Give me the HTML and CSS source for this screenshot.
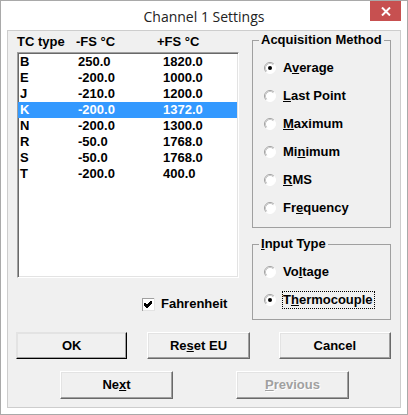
FILE: index.html
```html
<!DOCTYPE html>
<html>
<head>
<meta charset="utf-8">
<link rel="stylesheet" href="styles.css">
</head>
<body>
<div class="window">
  <div class="titlebar">
    <span></span>
    <span class="title">Channel 1 Settings</span>
    <span class="close"><svg width="10" height="9" viewBox="0 0 10 9"><path d="M1 0.5 L9 8.5 M9 0.5 L1 8.5" stroke="#fff" stroke-width="2"/></svg></span>
  </div>
  <div class="content">
    <div class="top">
      <div class="left">
        <div class="thead"><span>TC type</span><span>-FS °C</span><span>+FS °C</span></div>
        <div class="list">
          <div class="row"><span>B</span><span>250.0</span><span>1820.0</span></div>
          <div class="row"><span>E</span><span>-200.0</span><span>1000.0</span></div>
          <div class="row"><span>J</span><span>-210.0</span><span>1200.0</span></div>
          <div class="row sel"><span>K</span><span>-200.0</span><span>1372.0</span></div>
          <div class="row"><span>N</span><span>-200.0</span><span>1300.0</span></div>
          <div class="row"><span>R</span><span>-50.0</span><span>1768.0</span></div>
          <div class="row"><span>S</span><span>-50.0</span><span>1768.0</span></div>
          <div class="row"><span>T</span><span>-200.0</span><span>400.0</span></div>
        </div>
        <div class="check">
          <svg width="13" height="13" viewBox="0 0 13 13" shape-rendering="crispEdges">
            <rect x="0" y="0" width="13" height="13" fill="#fff"/>
            <path d="M0 0.5 H12.5 M0.5 0 V13" stroke="#a0a0a0"/>
            <path d="M0.5 12.5 H13 M12.5 0 V13" stroke="#e3e3e3"/>
            <path d="M3 5 V8 M4 6 V9 M5 7 V10 M6 6 V9 M7 5 V8 M8 4 V7 M9 3 V6" stroke="#000" stroke-width="1.1"/>
          </svg>
          <span>Fahrenheit</span>
        </div>
      </div>
      <div class="right">
        <fieldset class="group acq">
          <legend>Acquisition Method</legend>
          <div class="opt"><svg class="radio" width="12" height="12" viewBox="0 0 12 12"><circle cx="6" cy="6" r="5.5" fill="#fff"/><path d="M2.11 9.89 A5.5 5.5 0 0 1 9.89 2.11" fill="none" stroke="#a0a0a0"/><path d="M9.89 2.11 A5.5 5.5 0 0 1 2.11 9.89" fill="none" stroke="#fff"/><path d="M2.82 9.18 A4.5 4.5 0 0 1 9.18 2.82" fill="none" stroke="#c8c8c8"/><circle cx="6" cy="6" r="2" fill="#000"/></svg><span class="lbl">A<u>v</u>erage</span></div>
          <div class="opt"><svg class="radio" width="12" height="12" viewBox="0 0 12 12"><circle cx="6" cy="6" r="5.5" fill="#fff"/><path d="M2.11 9.89 A5.5 5.5 0 0 1 9.89 2.11" fill="none" stroke="#a0a0a0"/><path d="M9.89 2.11 A5.5 5.5 0 0 1 2.11 9.89" fill="none" stroke="#fff"/><path d="M2.82 9.18 A4.5 4.5 0 0 1 9.18 2.82" fill="none" stroke="#c8c8c8"/></svg><span class="lbl"><u>L</u>ast Point</span></div>
          <div class="opt"><svg class="radio" width="12" height="12" viewBox="0 0 12 12"><circle cx="6" cy="6" r="5.5" fill="#fff"/><path d="M2.11 9.89 A5.5 5.5 0 0 1 9.89 2.11" fill="none" stroke="#a0a0a0"/><path d="M9.89 2.11 A5.5 5.5 0 0 1 2.11 9.89" fill="none" stroke="#fff"/><path d="M2.82 9.18 A4.5 4.5 0 0 1 9.18 2.82" fill="none" stroke="#c8c8c8"/></svg><span class="lbl"><u>M</u>aximum</span></div>
          <div class="opt"><svg class="radio" width="12" height="12" viewBox="0 0 12 12"><circle cx="6" cy="6" r="5.5" fill="#fff"/><path d="M2.11 9.89 A5.5 5.5 0 0 1 9.89 2.11" fill="none" stroke="#a0a0a0"/><path d="M9.89 2.11 A5.5 5.5 0 0 1 2.11 9.89" fill="none" stroke="#fff"/><path d="M2.82 9.18 A4.5 4.5 0 0 1 9.18 2.82" fill="none" stroke="#c8c8c8"/></svg><span class="lbl">Mi<u>n</u>imum</span></div>
          <div class="opt"><svg class="radio" width="12" height="12" viewBox="0 0 12 12"><circle cx="6" cy="6" r="5.5" fill="#fff"/><path d="M2.11 9.89 A5.5 5.5 0 0 1 9.89 2.11" fill="none" stroke="#a0a0a0"/><path d="M9.89 2.11 A5.5 5.5 0 0 1 2.11 9.89" fill="none" stroke="#fff"/><path d="M2.82 9.18 A4.5 4.5 0 0 1 9.18 2.82" fill="none" stroke="#c8c8c8"/></svg><span class="lbl"><u>R</u>MS</span></div>
          <div class="opt"><svg class="radio" width="12" height="12" viewBox="0 0 12 12"><circle cx="6" cy="6" r="5.5" fill="#fff"/><path d="M2.11 9.89 A5.5 5.5 0 0 1 9.89 2.11" fill="none" stroke="#a0a0a0"/><path d="M9.89 2.11 A5.5 5.5 0 0 1 2.11 9.89" fill="none" stroke="#fff"/><path d="M2.82 9.18 A4.5 4.5 0 0 1 9.18 2.82" fill="none" stroke="#c8c8c8"/></svg><span class="lbl">Fr<u>e</u>quency</span></div>
        </fieldset>
        <fieldset class="group input">
          <legend><u>I</u>nput Type</legend>
          <div class="opt"><svg class="radio" width="12" height="12" viewBox="0 0 12 12"><circle cx="6" cy="6" r="5.5" fill="#fff"/><path d="M2.11 9.89 A5.5 5.5 0 0 1 9.89 2.11" fill="none" stroke="#a0a0a0"/><path d="M9.89 2.11 A5.5 5.5 0 0 1 2.11 9.89" fill="none" stroke="#fff"/><path d="M2.82 9.18 A4.5 4.5 0 0 1 9.18 2.82" fill="none" stroke="#c8c8c8"/></svg><span class="lbl">Vo<u>l</u>tage</span></div>
          <div class="opt"><svg class="radio" width="12" height="12" viewBox="0 0 12 12"><circle cx="6" cy="6" r="5.5" fill="#fff"/><path d="M2.11 9.89 A5.5 5.5 0 0 1 9.89 2.11" fill="none" stroke="#a0a0a0"/><path d="M9.89 2.11 A5.5 5.5 0 0 1 2.11 9.89" fill="none" stroke="#fff"/><path d="M2.82 9.18 A4.5 4.5 0 0 1 9.18 2.82" fill="none" stroke="#c8c8c8"/><circle cx="6" cy="6" r="2" fill="#000"/></svg><span class="lbl focus">T<u>h</u>ermocouple</span></div>
        </fieldset>
      </div>
    </div>
    <div class="btnrow one">
      <button class="btn ok">OK</button>
      <button class="btn reset">Re<u>s</u>et EU</button>
      <button class="btn cancel">Cancel</button>
    </div>
    <div class="btnrow two">
      <button class="btn next">Ne<u>x</u>t</button>
      <button class="btn prev" disabled><u>P</u>revious</button>
    </div>
  </div>
</div>
</body>
</html>
```

FILE: styles.css
```css
* { box-sizing: border-box; }

body {
  margin: 0;
  background: #fff;
}

.window {
  width: 408px;
  height: 415px;
  border: 1px solid #a9a9a9;
  background: #fff;
  padding: 0 6px 6px;
  display: flex;
  flex-direction: column;
}

.titlebar {
  height: 29px;
  display: grid;
  grid-template-columns: 1fr auto 1fr;
  font-family: "Open Sans", "Noto Sans", sans-serif;
  font-size: 14px;
  color: #222;
}

.title {
  align-self: center;
  padding-top: 2px;
}

.close {
  justify-self: end;
  width: 31px;
  height: 20px;
  background: #c75050;
  display: flex;
  align-items: center;
  justify-content: center;
}

.content {
  flex: 1;
  border: 1px solid #cdcdcd;
  background: #f0f0f0;
  padding: 1px 9px 0 8px;
  font: bold 13px/16px "Liberation Sans", Arial, sans-serif;
  color: #000;
}

.top {
  display: flex;
  gap: 13px;
  margin-left: 1px;
}

.left {
  width: 222px;
  padding-top: 2px;
}

.thead {
  display: grid;
  grid-template-columns: 59px 81px 1fr;
  height: 16px;
  margin-bottom: 2px;
}

.list {
  height: 226px;
  background: #fff;
  border: 1px solid;
  border-color: #a0a0a0 #fff #fff #a0a0a0;
  box-shadow: inset 1px 1px 0 #696969, inset -1px -1px 0 #e3e3e3;
  padding: 1px 1px 1px 0;
}

.row {
  display: grid;
  grid-template-columns: 58px 85px 1fr;
  height: 16px;
  padding-left: 2px;
}

.row.sel {
  background: #3399ff;
  color: #fff;
}

.check {
  display: flex;
  align-items: center;
  gap: 6px;
  margin-left: 125px;
  margin-top: 18px;
  height: 16px;
}

.right {
  width: 139px;
}

.group {
  margin: 0;
  min-width: 0;
  border: 1px solid #a0a0a0;
  padding: 6px 0 5px 11px;
}

.group legend {
  padding: 0 2px;
  margin-left: -5px;
  line-height: 16px;
  white-space: nowrap;
}

.group.input {
  margin-top: 8px;
}

.opt {
  display: flex;
  align-items: center;
  gap: 6px;
  height: 28px;
}

.radio {
  flex: none;
}

.lbl {
  border: 1px solid transparent;
  line-height: 16px;
  padding-right: 1px;
}

.lbl.focus {
  border: 1px dotted #000;
}

.btnrow {
  display: flex;
  margin-top: 12px;
}

.btn {
  font: inherit;
  color: #000;
  background: #f0f0f0;
  border: 1px solid;
  border-color: #fff #696969 #696969 #fff;
  box-shadow: inset -1px -1px 0 #a0a0a0, inset 1px 1px 0 #e3e3e3;
  padding: 0;
  display: flex;
  align-items: center;
  justify-content: center;
}

.btnrow.one .btn { height: 27px; }
.btnrow.two .btn { height: 28px; }

.ok {
  width: 112px;
  border-color: #e3e3e3 #000 #000 #e3e3e3;
}

.reset {
  width: 103px;
  margin-left: 20px;
}

.cancel {
  width: 113px;
  margin-left: 29px;
}

.next {
  width: 113px;
  margin-left: 44px;
}

.prev {
  width: 113px;
  margin-left: 63px;
  color: #a0a0a0;
  text-shadow: 1px 1px 0 #fff;
}
```
